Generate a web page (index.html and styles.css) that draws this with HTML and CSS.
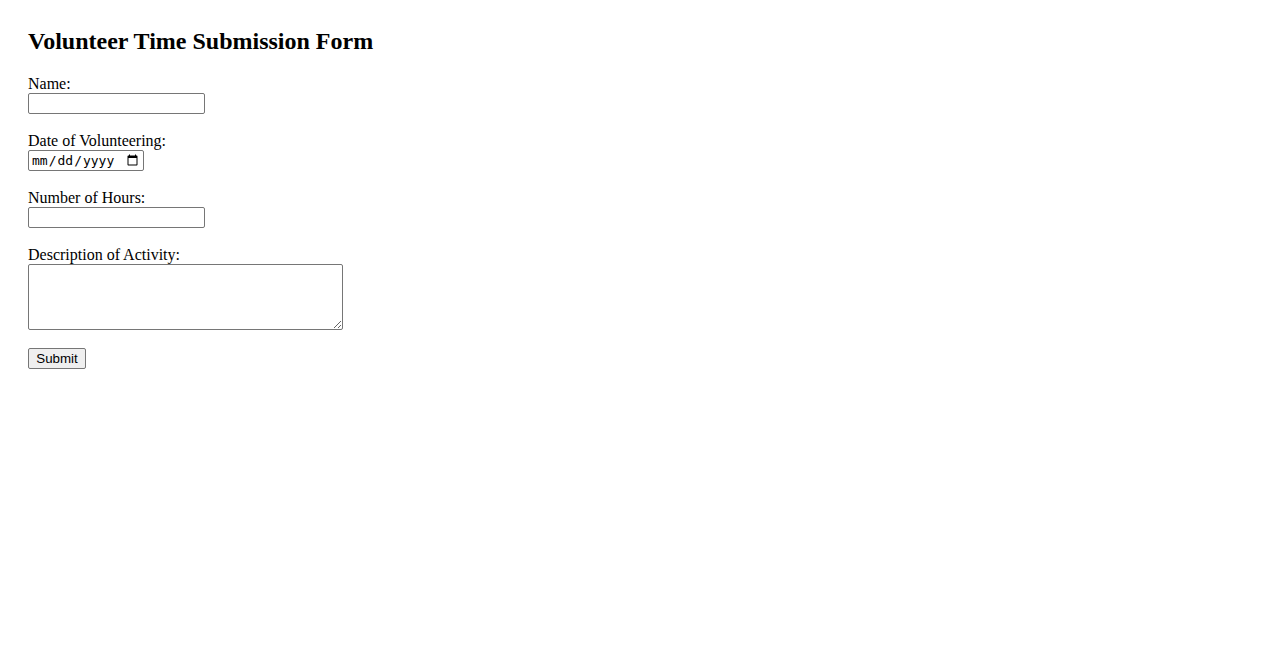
FILE: index.html
```html
<!DOCTYPE html>
<html>
<head>
<meta charset="utf-8">
<title>Volunteer Time Submission Form</title>
<link rel="stylesheet" href="styles.css">
</head>
<body>
<h2 class="title">Volunteer Time Submission Form</h2>
<form class="form">
  <div class="field">
    <label class="label" for="name">Name:</label>
    <input class="text-input" type="text" id="name">
  </div>
  <div class="field">
    <label class="label" for="date">Date of Volunteering:</label>
    <input class="date-input" type="date" id="date">
  </div>
  <div class="field">
    <label class="label" for="hours">Number of Hours:</label>
    <input class="text-input" type="text" id="hours">
  </div>
  <div class="field">
    <label class="label" for="desc">Description of Activity:</label>
    <textarea class="textarea" id="desc"></textarea>
  </div>
  <div class="field">
    <button class="submit" type="submit">Submit</button>
  </div>
</form>
</body>
</html>
```
FILE: styles.css
```css
body {
  margin: 0;
  padding: 28px;
  font-family: "Liberation Serif", "Times New Roman", serif;
  font-size: 16px;
  color: #000;
  background: #fff;
}
.title {
  margin: 0 0 20px 0;
  font-size: 24px;
  font-weight: bold;
  line-height: 27px;
}
.form {
  display: flex;
  flex-direction: column;
}
.field {
  display: flex;
  flex-direction: column;
  align-items: flex-start;
  margin-bottom: 18px;
}
.label {
  line-height: 18px;
  height: 18px;
}
.text-input {
  box-sizing: border-box;
  width: 177px;
  height: 21px;
  margin: 0;
  border: 1px solid #767676;
  border-radius: 2px;
  padding: 1px 2px;
  font-size: 13px;
}
.date-input {
  box-sizing: border-box;
  width: 116px;
  height: 21px;
  margin: 0;
  border: 1px solid #767676;
  border-radius: 2px;
  padding: 1px 2px;
  font-family: "DejaVu Sans Mono", monospace;
  font-size: 13px;
}
.textarea {
  box-sizing: border-box;
  width: 315px;
  height: 66px;
  margin: 0;
  border: 1px solid #767676;
  border-radius: 2px;
  padding: 2px;
  font-family: "DejaVu Sans Mono", monospace;
  font-size: 13px;
}
.submit {
  box-sizing: border-box;
  width: 58px;
  height: 21px;
  margin: 0;
  padding: 1px 6px;
  border: 1px solid #767676;
  border-radius: 2px;
  background: #efefef;
  font-family: "Liberation Sans", Arial, sans-serif;
  font-size: 13.33px;
  color: #000;
}
```
